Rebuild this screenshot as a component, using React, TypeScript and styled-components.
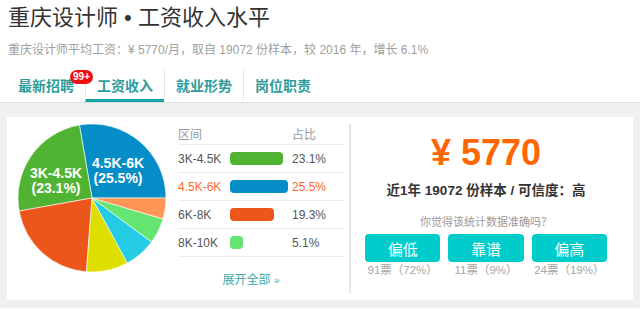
import styled, { createGlobalStyle } from "styled-components";

const GlobalStyle = createGlobalStyle`
  html, body {
    margin: 0;
    padding: 0;
    background: #ffffff;
  }
  body {
    font-family: "Liberation Sans", "Noto Sans CJK SC", sans-serif;
    color: #333;
  }
`;

const Page = styled.div`
  width: 640px;
  height: 309px;
  overflow: hidden;
`;

const Header = styled.div`
  padding: 3px 7px 0;
  border-bottom: 1px solid #dcdcdc;
`;

const Title = styled.h1`
  margin: 0 0 0 1px;
  font-size: 22px;
  line-height: 30px;
  font-weight: normal;
  color: #333;
`;

const Subtitle = styled.div`
  margin-top: 9px;
  font-size: 12px;
  line-height: 16px;
  color: #a0a0a0;
  padding-left: 1px;
`;

const Tabs = styled.div`
  display: flex;
  margin-top: 12px;
  height: 32px;
`;

const Tab = styled.div<{ $active?: boolean; $first?: boolean }>`
  position: relative;
  display: flex;
  align-items: center;
  padding: 0 11px;
  font-size: 14px;
  font-weight: bold;
  color: #2f9c9c;
  border-left: ${(p) => (p.$first ? "none" : "1px solid #e8e8e8")};
  border-bottom: 3px solid ${(p) => (p.$active ? "#13a3a3" : "transparent")};
`;

const Badge = styled.span`
  position: absolute;
  right: -8px;
  top: 0;
  background: #ee1111;
  color: #fff;
  font-size: 10px;
  font-weight: bold;
  line-height: 14px;
  padding: 0 3px;
  border-radius: 8px;
  z-index: 2;
`;

const Body = styled.div`
  background: #f0f0f0;
  padding: 14px 7px 8px;
`;

const Card = styled.div`
  background: #fff;
  height: 183px;
  display: flex;
`;

const PieBox = styled.div`
  width: 160px;
  padding: 7px 0 0 11px;
`;

const Table = styled.div`
  width: 166px;
  padding-top: 6px;
  font-size: 12px;
`;

const Row = styled.div<{ $head?: boolean; $hl?: boolean }>`
  display: grid;
  grid-template-columns: 52px 62px 1fr;
  align-items: center;
  height: ${(p) => (p.$head ? "21px" : "27px")};
  border-bottom: 1px solid #ebebeb;
  color: ${(p) => (p.$head ? "#999" : p.$hl ? "#ff6a2b" : "#555")};
`;

const Bar = styled.div<{ $color: string }>`
  height: 13px;
  border-radius: 4px;
  background: ${(p) => p.$color};
`;

const More = styled.div`
  text-align: center;
  color: #3aa9a9;
  margin-top: 13px;
  padding-right: 20px;
  font-size: 12px;
  span {
    font-size: 10px;
  }
`;

const Divider = styled.div`
  width: 2px;
  margin: 7px 0 7px 5px;
  background: #e6e6e6;
`;

const Summary = styled.div`
  flex: 1;
  padding: 16px 26px 0 14px;
  display: flex;
  flex-direction: column;
  align-items: center;
`;

const Salary = styled.div`
  font-size: 36px;
  font-weight: bold;
  color: #ff6600;
  line-height: 40px;
`;

const Trust = styled.div`
  margin-top: 9px;
  font-size: 13.5px;
  font-weight: bold;
  color: #333;
  line-height: 18px;
`;

const Question = styled.div`
  margin-top: 15px;
  font-size: 11px;
  color: #9a9a9a;
  line-height: 14px;
`;

const Votes = styled.div`
  margin-top: 5px;
  width: 100%;
  display: grid;
  grid-template-columns: repeat(3, 1fr);
  gap: 8px;
`;

const Vote = styled.div`
  display: flex;
  flex-direction: column;
  align-items: center;
`;

const VoteButton = styled.button`
  width: 100%;
  height: 28px;
  border: none;
  border-radius: 4px;
  background: #00cccc;
  color: #fff;
  font-family: inherit;
  font-size: 15px;
  padding: 0;
`;

const VoteCount = styled.div`
  font-size: 11.5px;
  color: #a5a5a5;
  line-height: 16px;
`;

const slices = [
  { v: 25.5, c: "#058DC7" },
  { v: 23.1, c: "#50B432" },
  { v: 19.3, c: "#ED561B" },
  { v: 8.4, c: "#DDDF00" },
  { v: 6.4, c: "#24CBE5" },
  { v: 5.1, c: "#64E572" },
  { v: 4.2, c: "#FF9655" },
];

const rows = [
  { label: "3K-4.5K", pct: 23.1, color: "#50B432" },
  { label: "4.5K-6K", pct: 25.5, color: "#058DC7", hl: true },
  { label: "6K-8K", pct: 19.3, color: "#ED561B" },
  { label: "8K-10K", pct: 5.1, color: "#64E572" },
];

const Pie = () => {
  const cx = 74;
  const cy = 74;
  const r = 74;
  const total = slices.reduce((s, x) => s + x.v, 0);
  let a = 0;
  const pt = (deg: number) => {
    const t = (deg * Math.PI) / 180;
    return `${cx + r * Math.cos(t)} ${cy - r * Math.sin(t)}`;
  };
  return (
    <svg width="148" height="148" viewBox="0 0 148 148">
      {slices.map((s, i) => {
        const start = a;
        const sweep = (s.v / total) * 360;
        a += sweep;
        const d = `M${cx} ${cy} L${pt(start)} A${r} ${r} 0 ${sweep > 180 ? 1 : 0} 0 ${pt(a)} Z`;
        return <path key={i} d={d} fill={s.c} stroke="#fff" strokeWidth="0.6" />;
      })}
      <g fill="#fff" fontWeight="bold" fontSize="14" textAnchor="middle" fontFamily="Liberation Sans, sans-serif">
        <text x="100" y="44">4.5K-6K</text>
        <text x="100" y="59">(25.5%)</text>
        <text x="38" y="54">3K-4.5K</text>
        <text x="38" y="69">(23.1%)</text>
      </g>
    </svg>
  );
};

export default function App() {
  return (
    <Page>
      <GlobalStyle />
      <Header>
        <Title>重庆设计师 • 工资收入水平</Title>
        <Subtitle>重庆设计师平均工资：¥ 5770/月，取自 19072 份样本，较 2016 年，增长 6.1%</Subtitle>
        <Tabs>
          <Tab $first>
            最新招聘
            <Badge>99+</Badge>
          </Tab>
          <Tab $active>工资收入</Tab>
          <Tab>就业形势</Tab>
          <Tab>岗位职责</Tab>
        </Tabs>
      </Header>
      <Body>
        <Card>
          <PieBox>
            <Pie />
          </PieBox>
          <Table>
            <Row $head>
              <span>区间</span>
              <span />
              <span>占比</span>
            </Row>
            {rows.map((r) => (
              <Row key={r.label} $hl={r.hl}>
                <span>{r.label}</span>
                <Bar $color={r.color} style={{ width: Math.max(13, r.pct * 2.28) }} />
                <span>{r.pct}%</span>
              </Row>
            ))}
            <More>
              展开全部 <span>»</span>
            </More>
          </Table>
          <Divider />
          <Summary>
            <Salary>¥ 5770</Salary>
            <Trust>近1年 19072 份样本 / 可信度：高</Trust>
            <Question>你觉得该统计数据准确吗？</Question>
            <Votes>
              <Vote>
                <VoteButton>偏低</VoteButton>
                <VoteCount>91票（72%）</VoteCount>
              </Vote>
              <Vote>
                <VoteButton>靠谱</VoteButton>
                <VoteCount>11票（9%）</VoteCount>
              </Vote>
              <Vote>
                <VoteButton>偏高</VoteButton>
                <VoteCount>24票（19%）</VoteCount>
              </Vote>
            </Votes>
          </Summary>
        </Card>
      </Body>
    </Page>
  );
}
